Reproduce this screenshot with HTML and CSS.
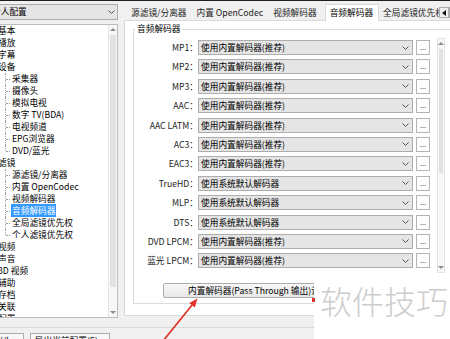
FILE: index.html
```html
<!DOCTYPE html>
<html lang="zh-CN">
<head>
    <meta charset="UTF-8">
    <meta name="viewport" content="width=device-width, initial-scale=1.0">
    <title>选项 - 音频解码器</title>
    <link rel="stylesheet" href="styles.css">
</head>
<body>

    <div class="topbar"></div>

    <div class="main">
        <!-- Profile + settings tree -->
        <div class="sidebar">
            <div class="profile-select">
                <span>个人配置</span>
                <svg class="chevron" width="7" height="4" viewBox="0 0 7 4"><polyline points="0.5,0.5 3.5,3.5 6.5,0.5" /></svg>
            </div>
            <div class="tree">
                <ul class="tree-list">
                    <li class="node">基本</li>
                    <li class="node">播放</li>
                    <li class="node">字幕</li>
                    <li class="node">设备</li>
                    <li class="leaf">采集器</li>
                    <li class="leaf">摄像头</li>
                    <li class="leaf">模拟电视</li>
                    <li class="leaf">数字 TV(BDA)</li>
                    <li class="leaf">电视频道</li>
                    <li class="leaf">EPG浏览器</li>
                    <li class="leaf last">DVD/蓝光</li>
                    <li class="node">滤镜</li>
                    <li class="leaf">源滤镜/分离器</li>
                    <li class="leaf">内置 OpenCodec</li>
                    <li class="leaf">视频解码器</li>
                    <li class="leaf sel"><span>音频解码器</span></li>
                    <li class="leaf">全局滤镜优先权</li>
                    <li class="leaf last">个人滤镜优先权</li>
                    <li class="node">视频</li>
                    <li class="node">声音</li>
                    <li class="node">3D 视频</li>
                    <li class="node">辅助</li>
                    <li class="node">存档</li>
                    <li class="node">关联</li>
                    <li class="node">配置</li>
                </ul>
                <div class="vscroll tree-scroll">
                    <span class="arrow"><i class="tri-up"></i></span>
                    <span class="thumb"></span>
                    <span class="track"></span>
                    <span class="arrow"><i class="tri-down"></i></span>
                </div>
            </div>
        </div>

        <!-- Tab control -->
        <div class="content">
            <div class="tabs">
                <span class="tab">源滤镜/分离器</span>
                <span class="tab">内置 OpenCodec</span>
                <span class="tab">视频解码器</span>
                <span class="tab active">音频解码器</span>
                <span class="tab">全局滤镜优先权</span>
                <span class="tab">个人滤镜优先权</span>
                <div class="tab-scroll">
                    <span class="tab-btn"><i class="tri-left"></i></span>
                    <span class="tab-btn"><i class="tri-right"></i></span>
                </div>
            </div>

            <div class="panel">
                <fieldset class="group">
                    <legend>音频解码器</legend>
                    <div class="scroller">
                        <div class="rows" id="decoder-rows">
                            <!-- rows are filled by the script below -->
                        </div>
                        <div class="vscroll group-scroll">
                            <span class="arrow"><i class="tri-up"></i></span>
                            <span class="thumb"></span>
                            <span class="track"></span>
                            <span class="arrow"><i class="tri-down"></i></span>
                        </div>
                    </div>
                    <button class="pass-btn">内置解码器(Pass Through 输出)设置</button>
                </fieldset>
            </div>
        </div>
    </div>

    <div class="footer">
        <button class="foot-btn first">(/km</button>
        <button class="foot-btn second">导出当前配置(S)...</button>
    </div>

    <div class="watermark">软件技巧</div>

    <svg class="annot" width="450" height="339" viewBox="0 0 450 339">
        <line x1="163" y1="341" x2="192.5" y2="304.5" />
        <polygon points="197.5,298.5 194.8,307.6 189.3,303.1" />
        <rect x="312" y="298" width="3" height="4" />
    </svg>

    <script>
        // Decoder list of the audio page
        const BUILTIN = '使用内置解码器(推荐)';
        const SYSTEM = '使用系统默认解码器';
        const decoders = [
            ['MP1', BUILTIN], ['MP2', BUILTIN], ['MP3', BUILTIN],
            ['AAC', BUILTIN], ['AAC LATM', BUILTIN], ['AC3', BUILTIN],
            ['EAC3', BUILTIN], ['TrueHD', SYSTEM], ['MLP', SYSTEM],
            ['DTS', SYSTEM], ['DVD LPCM', BUILTIN], ['蓝光 LPCM', BUILTIN],
            ['WMA', BUILTIN]
        ];

        const rows = document.getElementById('decoder-rows');
        decoders.forEach(([name, value]) => {
            rows.insertAdjacentHTML('beforeend', `
                <label>${name}：</label>
                <div class="select">
                    <span>${value}</span>
                    <svg class="chevron" width="7" height="4" viewBox="0 0 7 4"><polyline points="0.5,0.5 3.5,3.5 6.5,0.5" /></svg>
                </div>
                <button class="more">...</button>
            `);
        });
    </script>

</body>
</html>
```

FILE: styles.css
```css
body { margin: 0; width: 450px; height: 339px; overflow: hidden; position: relative; background: #f0f0f0; color: #000; font: 8.7px/12px "Noto Sans CJK SC", "Noto Sans", sans-serif; }
ul { margin: 0; padding: 0; list-style: none; }
button { font: inherit; color: inherit; margin: 0; padding: 0; }

.topbar { height: 1px; background: #1e1e1e; }
.main { display: flex; align-items: flex-start; }

/* left column */
.sidebar { flex: 0 0 130px; margin-left: -12px; padding-top: 3px; }
.profile-select { box-sizing: border-box; height: 16px; border: 1px solid #adadad; background: #e5e5e5; display: flex; align-items: center; justify-content: space-between; padding: 0 2px 0 3px; }
.chevron { fill: none; stroke: #555; stroke-width: 1; }

.tree { margin-top: 4px; height: 294px; box-sizing: border-box; border: 1px solid #bcbcbc; background: #fff; display: flex; }
.tree-list { flex: 1; overflow: hidden; }
.tree-list li { position: relative; height: 12px; line-height: 12px; white-space: nowrap; }
.tree-list .node { padding-left: 9px; }
.tree-list .leaf { padding-left: 23px; }
.tree-list .leaf::before { content: ""; position: absolute; left: 16px; top: 0; bottom: 0; border-left: 1px dotted #a0a0a0; }
.tree-list .leaf.last::before { bottom: 6px; }
.tree-list .leaf::after { content: ""; position: absolute; left: 17px; top: 6px; width: 4px; border-top: 1px dotted #a0a0a0; }
.tree-list .sel span { background: #3399ff; color: #fff; padding: 0 1px; margin-left: -1px; }

/* scrollbars */
.vscroll { display: flex; flex-direction: column; width: 8px; background: #f7f7f7; }
.vscroll .arrow { height: 9px; display: flex; align-items: center; justify-content: center; }
.vscroll .thumb { background: #e2e2e2; margin: 1px 1px 0; }
.vscroll .track { flex: 1; }
.tree-scroll { border-left: 1px solid #e6e6e6; }
.tree-scroll .thumb { height: 252px; }
.group-scroll { margin-left: 7px; box-sizing: border-box; border: 1px solid #e3e3e3; }
.group-scroll .thumb { height: 124px; }

.tri-up { border-bottom: 3px solid #8c8c8c; border-left: 3px solid transparent; border-right: 3px solid transparent; }
.tri-down { border-top: 3px solid #8c8c8c; border-left: 3px solid transparent; border-right: 3px solid transparent; }
.tri-left { border-right: 4px solid #111; border-top: 3px solid transparent; border-bottom: 3px solid transparent; }
.tri-right { border-left: 4px solid #111; border-top: 3px solid transparent; border-bottom: 3px solid transparent; }

/* tab control */
.content { flex: 0 0 336px; margin-left: 6px; }
.tabs { position: relative; height: 19px; display: flex; align-items: flex-end; padding-left: 2px; }
.tab { flex-shrink: 0; white-space: nowrap; height: 15px; line-height: 15px; padding: 0 5px; color: #222; }
.tab.active { position: relative; z-index: 1; height: 16px; margin: 0 -1px -1px 3px; padding: 0 5px 0 4px; background: #fff; border: 1px solid #d9d9d9; border-bottom: none; color: #000; }
.tab-scroll { position: absolute; z-index: 2; left: 315px; top: 6px; display: flex; }
.tab-btn { box-sizing: border-box; width: 10px; height: 11px; border: 1px solid #adadad; background: #f0f0f0; display: flex; align-items: center; justify-content: center; }

.panel { background: #fff; border: 1px solid #d9d9d9; padding: 2px 11px 11px 8px; }
.group { margin: 0; padding: 3px 0 5px; border: 1px solid #dcdcdc; min-width: 0; }
.group legend { padding: 0 2px; margin-left: 1px; line-height: 12px; }

.scroller { display: flex; height: 235px; overflow: hidden; }
.rows { flex: 0 0 296px; display: grid; grid-template-columns: 64px 218px 14px; row-gap: 4.4px; align-content: start; padding-top: 2px; }
.rows label { text-align: right; line-height: 15px; color: #222; white-space: nowrap; }
.select { box-sizing: border-box; width: 215px; height: 15px; border: 1px solid #adadad; background: #e5e5e5; display: flex; align-items: center; justify-content: space-between; padding: 0 3px 0 2px; line-height: 13px; white-space: nowrap; }
.more { box-sizing: border-box; width: 14px; height: 15px; border: 1px solid #b4b4b4; background: #fdfdfd; font-size: 7px; line-height: 11px; color: #333; }

.pass-btn { display: block; margin: 10px 0 0 29px; box-sizing: border-box; height: 15px; padding: 0 24px; border: 1px solid #adadad; border-radius: 2px; background: linear-gradient(#f7f7f7, #e8e8e8); line-height: 13px; white-space: nowrap; }

/* bottom buttons */
.footer { margin-top: 9px; border-top: 1px solid #dadada; padding-top: 5px; display: flex; gap: 6px; margin-left: -20px; }
.foot-btn { box-sizing: border-box; height: 16px; border: 1px solid #adadad; background: #f7f7f7; line-height: 14px; white-space: nowrap; }
.foot-btn.first { width: 44px; text-align: right; padding-right: 4px; }
.foot-btn.second { width: 80px; }

/* overlays */
.watermark { position: absolute; left: 314px; top: 274px; right: 0; bottom: 0; background: #fff; color: #cdcdcd; font-size: 32px; line-height: 32px; font-weight: 300; padding: 10px 0 0 6px; white-space: nowrap; }
.annot { position: absolute; left: 0; top: 0; pointer-events: none; }
.annot line { stroke: #e2322c; stroke-width: 1.7; }
.annot polygon, .annot rect { fill: #e2322c; }
```
